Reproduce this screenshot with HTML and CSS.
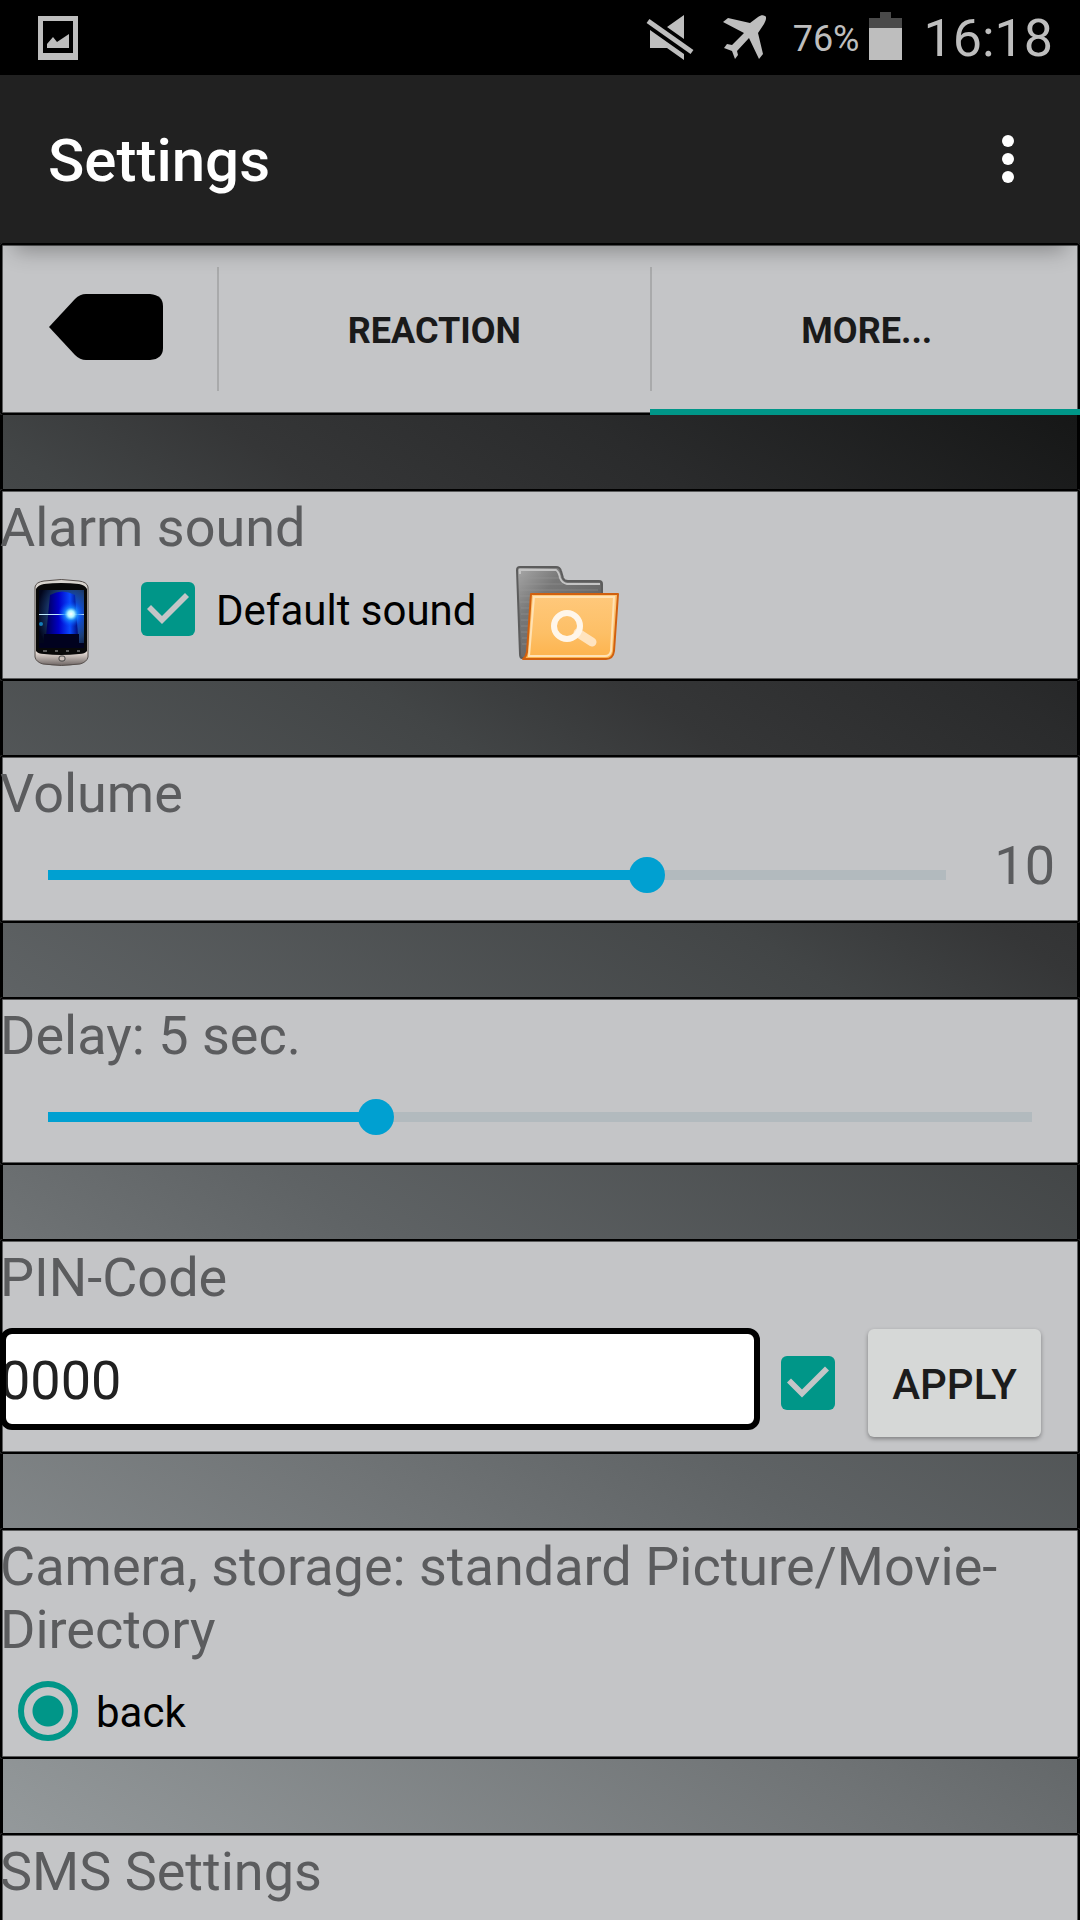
FILE: index.html
```
<!DOCTYPE html>
<html lang="en">
  <head>
    <meta charset="UTF-8" />
    <meta name="viewport" content="width=device-width, initial-scale=1.0" />
    <title>Settings</title>
    <link rel="stylesheet" href="styles.css">
  </head>
  <body>
    <div class="screen">
      <div class="statusbar">
        <svg class="status-picture" width="40" height="44" viewBox="0 0 40 44">
          <path fill="#bebebe" fill-rule="evenodd" d="M0 0h40v44H0zM5 5v32h30V5z" />
          <path fill="#bebebe" d="M9 28l6-7 4 5 12-8v14H9z" />
        </svg>
        <svg class="status-mute" width="48" height="46" viewBox="0 0 48 46">
          <path fill="#bebebe" d="M38 0v24L21 12zM4 15l34 24v6L21 33H4z" />
          <path stroke="#000" stroke-width="10" d="M3 7l42 30" />
          <path stroke="#bebebe" stroke-width="5" d="M2 6l44 31" />
        </svg>
        <svg class="status-plane" width="46" height="46" viewBox="0 0 46 46">
          <path fill="#bebebe" d="M43 1c2 1 1 4-1 8l-6 9 5 21-4 5-10-21-12 13 1 4-3 4-3-8-8-3 3-4 5 1 12-12L1 7l5-4 22 5 8-6c3-2 5-2 7-1z" />
        </svg>
        <span class="battery-text">76%</span>
        <svg class="status-battery" width="33" height="48" viewBox="0 0 33 48">
          <path fill="#4a4a4a" d="M11 0h11v6h11v10H0V6h11z" />
          <path fill="#bebebe" d="M0 16h33v32H0z" />
        </svg>
        <span class="clock">16:18</span>
      </div>

      <header class="appbar">
        <h1>Settings</h1>
        <button class="menu-button" aria-label="More options">
          <svg width="12" height="48" viewBox="0 0 12 48">
            <circle cx="6" cy="6" r="6" fill="#fff" />
            <circle cx="6" cy="24" r="6" fill="#fff" />
            <circle cx="6" cy="42" r="6" fill="#fff" />
          </svg>
        </button>
      </header>

      <main class="page">
        <nav class="tabs">
          <button class="tab" aria-label="Back">
            <svg width="114" height="66" viewBox="0 0 114 66">
              <path d="M0 33L26 5Q31 0 37 0H101Q114 1 114 12V54Q114 65 101 66H37Q31 66 26 61Z" />
            </svg>
          </button>
          <button class="tab">REACTION</button>
          <button class="tab active">MORE...</button>
        </nav>

        <section class="card">
          <h2 class="large">Alarm sound</h2>
          <div class="row">
            <svg class="phone" width="55" height="87" viewBox="0 0 55 87">
              <defs>
                <linearGradient id="case" x1="0" y1="0" x2="0" y2="1">
                  <stop offset="0" stop-color="#d8d4ce" />
                  <stop offset="0.85" stop-color="#e6dcd6" />
                  <stop offset="1" stop-color="#6d6563" />
                </linearGradient>
                <radialGradient id="light" cx="0.7" cy="0.42" r="0.75">
                  <stop offset="0" stop-color="#4fa8ff" />
                  <stop offset="0.25" stop-color="#0d4fe0" />
                  <stop offset="0.6" stop-color="#1c3f78" />
                  <stop offset="1" stop-color="#02061c" />
                </radialGradient>
                <linearGradient id="dome" x1="0" y1="0" x2="1" y2="0">
                  <stop offset="0" stop-color="#000050" />
                  <stop offset="0.4" stop-color="#0000c8" />
                  <stop offset="0.75" stop-color="#0a4cff" />
                  <stop offset="1" stop-color="#000a78" />
                </linearGradient>
                <radialGradient id="flare">
                  <stop offset="0" stop-color="#fff" />
                  <stop offset="0.25" stop-color="#aef6ff" />
                  <stop offset="0.5" stop-color="#1a90ff" stop-opacity="0.8" />
                  <stop offset="1" stop-color="#0040ff" stop-opacity="0" />
                </radialGradient>
              </defs>
              <path fill="url(#case)" stroke="#554e4b" d="M1 8Q2 3 10 2Q27-1 45 2Q53 3 54 8V78Q53 83 46 85Q27 88 9 85Q2 83 1 78Z" />
              <path fill="#080808" d="M2 10Q4 6 10 5Q27 3 45 5Q51 6 53 10V72Q51 75 45 75Q27 77 10 75Q4 75 2 72Z" />
              <path fill="url(#light)" d="M5 11h45v58H5z" />
              <path fill="url(#dome)" d="M16 16Q28 9 41 16L44 57H12z" />
              <path fill="#01021f" d="M10 55h35v9H10zM5 64h45v5H5z" />
              <path stroke="#bfe9ff" d="M5 35.500h45" />
              <circle cx="37" cy="35" r="13" fill="url(#flare)" />
              <circle cx="7" cy="45" r="2" fill="#147bb8" />
              <path stroke="#aaa" d="M9 72h4M21 72h3M32 72h3M43 72h3" />
              <rect x="25" y="77" width="6" height="5" rx="2" fill="#c9beb8" stroke="#444" />
            </svg>
            <label class="option">
              <input type="checkbox" class="checkbox" checked />
              <span>Default sound</span>
            </label>
            <button class="folder" aria-label="Choose sound">
              <svg width="104" height="96" viewBox="0 0 104 96">
                <defs>
                  <linearGradient id="back" x1="0" y1="0" x2="1" y2="1">
                    <stop offset="0" stop-color="#aaa" />
                    <stop offset="0.3" stop-color="#777" />
                    <stop offset="1" stop-color="#555" />
                  </linearGradient>
                  <linearGradient id="front" x1="0" y1="0" x2="0" y2="1">
                    <stop offset="0" stop-color="#ffc97c" />
                    <stop offset="0.6" stop-color="#fdbf66" />
                    <stop offset="1" stop-color="#fdb34c" />
                  </linearGradient>
                </defs>
                <path fill="url(#back)" stroke="#5c5c5c" stroke-width="2" d="M1 4Q1 1 4 1H40Q44 1 45 5L47 12Q48 15 52 15H83Q86 15 86 18V92H6Q4 92 4 88Z" />
                <path fill="none" stroke="#c4c4c4" stroke-width="2" d="M4 8V4H40Q43 6 44 12Q46 17 51 18H84" />
                <path stroke="#999" opacity="0.5" d="M4 12h39M4 18h43M4 24h78M4 30h12M4 36h11M5 42h9M5 48h9M5 54h8M5 60h8M5 66h7M6 72h6M6 78h5" />
                <path fill="url(#front)" stroke="#d0600f" stroke-width="2" stroke-linejoin="round" d="M15 28H102L98 85Q97 93 90 93H7Q10 91 11 86Z" />
                <path fill="none" stroke="#ffe2b4" stroke-width="2" d="M18 31H98L95 85Q94 90 89 90H13Z" />
                <path stroke="#ffe4c0" stroke-width="9" stroke-linecap="round" d="M62 67L76 76" />
                <circle cx="51" cy="60" r="13" fill="none" stroke="#fff6ea" stroke-width="6" />
              </svg>
            </button>
          </div>
        </section>

        <section class="card">
          <h2 class="large"><label for="volume">Volume</label></h2>
          <div class="row">
            <input type="range" class="slider" id="volume" min="0" max="15" value="10" style="--fill: 66.67%" />
            <output class="large volume-value" for="volume">10</output>
          </div>
        </section>

        <section class="card">
          <h2 class="large"><label for="delay">Delay: 5 sec.</label></h2>
          <div class="row">
            <input type="range" class="slider" id="delay" min="0" max="15" value="5" style="--fill: 33.33%" />
          </div>
        </section>

        <section class="card">
          <h2 class="large"><label for="pin">PIN-Code</label></h2>
          <div class="row pin-row">
            <input type="text" class="pin" id="pin" value="0000" />
            <input type="checkbox" class="checkbox" aria-label="Use PIN-Code" checked />
            <button class="apply">APPLY</button>
          </div>
        </section>

        <section class="card">
          <h2 class="large">Camera, storage: standard Picture/Movie-Directory</h2>
          <div class="row">
            <label class="option radio-option">
              <input type="radio" class="radio" name="camera" checked />
              <span>back</span>
            </label>
          </div>
        </section>

        <section class="card sms">
          <h2 class="large">SMS Settings</h2>
        </section>
      </main>
    </div>
  </body>
</html>
```

FILE: styles.css
```
* {
  box-sizing: border-box;
}

body {
  margin: 0;
  font-family: Roboto, sans-serif;
  background-color: #444;
}

button,
input {
  font-family: inherit;
  margin: 0;
}

button {
  border: none;
  padding: 0;
  background: none;
  cursor: pointer;
}

svg {
  display: block;
}

.screen {
  height: 100vh;
  display: flex;
  flex-direction: column;
  overflow: hidden;
}

/* status bar */
.statusbar {
  flex: none;
  display: flex;
  align-items: center;
  height: 75px;
  padding: 0 27px 0 38px;
  background-color: #000;
  color: #bebebe;
}

.status-mute {
  margin-left: auto;
}

.status-plane {
  margin-left: 28px;
}

.battery-text {
  margin-left: 25px;
  padding-top: 2px;
  font-size: 36px;
}

.status-battery {
  margin: 0 22px 4px 9px;
}

.clock {
  padding-top: 2px;
  font-size: 52px;
}

/* title bar */
.appbar {
  flex: none;
  position: relative;
  z-index: 1;
  display: flex;
  align-items: center;
  justify-content: space-between;
  height: 168px;
  padding: 0 48px;
  background-color: #212121;
  color: #fff;
  box-shadow: 0 22px 20px -14px rgba(0, 0, 0, 0.3);
}

.appbar h1 {
  margin: 0;
  padding-top: 2px;
  font-size: 60px;
  font-weight: 500;
}

.menu-button {
  padding: 12px 18px;
}

.page {
  flex: 1;
  min-height: 0;
  display: flex;
  flex-direction: column;
  gap: 74px;
  overflow: hidden;
  background: linear-gradient(
    213deg,
    #0e0f0e 0%,
    #171818 8%,
    #2a2b2c 21%,
    #353637 31%,
    #424546 38%,
    #5f6365 61%,
    #6f7375 71%,
    #929799 95%,
    #999ea1 100%
  );
  box-shadow: inset 3px 0 #000, inset -3px 0 #000;
}

.tabs,
.card {
  flex: none;
  background-color: #c4c5c7;
  border-radius: 3px;
  box-shadow: inset 0 0 0 2px #000, inset 0 0 0 3px #5a5b5c;
}

/* tabs */
.tabs {
  display: grid;
  grid-template-columns: 1fr 2fr 2fr;
  gap: 2px;
  height: 172px;
}

.tab {
  display: flex;
  align-items: center;
  justify-content: center;
  padding: 4px 0 0 4px;
  font-size: 36px;
  font-weight: 700;
  color: #1a1a1a;
}

.tab:first-child {
  padding: 0 4px 4px 0;
}

.tab + .tab {
  background: linear-gradient(#a9aaab, #a9aaab) left center / 2px 124px no-repeat;
}

.tab.active {
  box-shadow: inset 0 -6px #009688;
}

/* cards */
.large {
  margin: 0;
  padding: 7px 0 2px;
  font-size: 54px;
  font-weight: 400;
  line-height: 63px;
  color: #5b5c5e;
}

.row {
  display: flex;
  align-items: flex-start;
}

.option {
  display: flex;
  align-items: center;
  gap: 21px;
  height: 96px;
  font-size: 42px;
  color: #000;
}

.option span {
  padding-top: 2px;
}

.checkbox,
.radio {
  -webkit-appearance: none;
  appearance: none;
  flex: none;
  cursor: pointer;
}

.checkbox {
  width: 54px;
  height: 54px;
  border-radius: 6px;
  background-color: #b4b5b7;
}

.checkbox:checked {
  background-color: #009688;
}

.checkbox:checked::before {
  content: "";
  display: block;
  width: 54px;
  height: 54px;
  background-color: #c4c5c7;
  clip-path: polygon(6px 27px, 10px 23px, 21px 34px, 44px 11px, 48px 15px, 21px 42px);
}

.radio {
  width: 60px;
  height: 60px;
  border: 6px solid #009688;
  border-radius: 50%;
}

.radio:checked {
  background: radial-gradient(circle, #009688 15px, transparent 16px);
}

.radio-option {
  padding-left: 18px;
  gap: 18px;
}

.phone {
  margin: 18px 52px 0 34px;
}

.card:has(.phone) {
  height: 192px;
}

.folder {
  margin: 5px 0 0 40px;
}

.slider {
  -webkit-appearance: none;
  appearance: none;
  flex: 1;
  min-width: 0;
  height: 36px;
  margin: 30px;
  background: linear-gradient(to right, #00a0d1 var(--fill), #b2babe var(--fill))
    center / calc(100% - 36px) 10px no-repeat;
  cursor: pointer;
}

.slider::-webkit-slider-thumb {
  -webkit-appearance: none;
  width: 36px;
  height: 36px;
  border-radius: 50%;
  background-color: #00a0d1;
}

.volume-value {
  margin-right: 25px;
}

.pin-row {
  align-items: baseline;
  padding: 17px 39px 17px 0;
}

.pin-row .checkbox {
  align-self: center;
  margin: 0 33px 0 21px;
}

.pin {
  flex: 1;
  min-width: 0;
  height: 102px;
  padding: 2px 0 0;
  border: 6px solid #000;
  border-radius: 12px;
  background-color: #fff;
  font-size: 54px;
  color: #212121;
  text-indent: -6px;
}

.apply {
  width: 173px;
  height: 108px;
  padding-top: 2px;
  border-radius: 6px;
  background-color: #d6d8d7;
  box-shadow: 0 2px 4px rgba(0, 0, 0, 0.35);
  font-size: 42px;
  font-weight: 500;
  color: #1c1c1c;
}

.sms {
  min-height: 168px;
}
```
